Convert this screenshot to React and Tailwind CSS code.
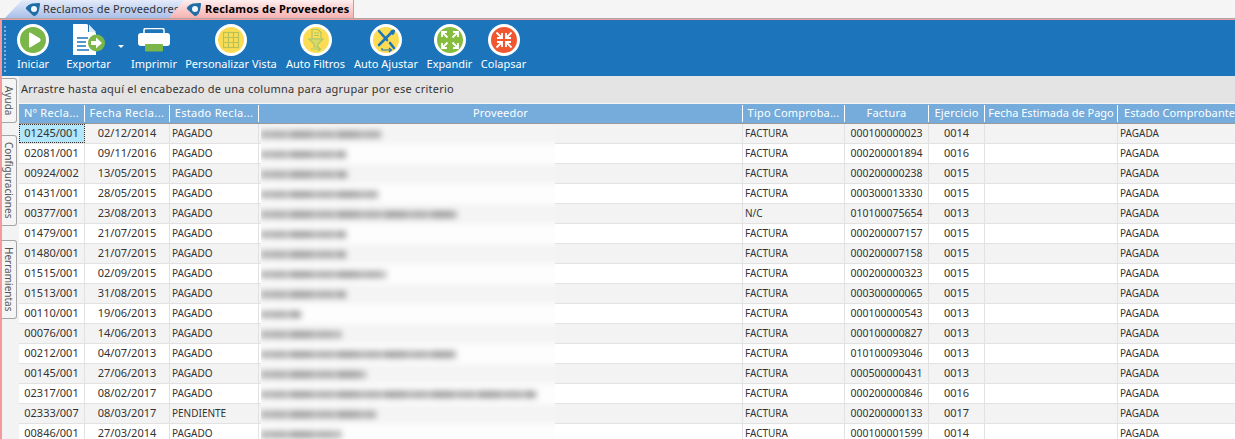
import React from 'react';

const rows = [
  ['01245/001', '02/12/2014', 'PAGADO', 'FACTURA', '000100000023', '0014', 120],
  ['02081/001', '09/11/2016', 'PAGADO', 'FACTURA', '000200001894', '0016', 85],
  ['00924/002', '13/05/2015', 'PAGADO', 'FACTURA', '000200000238', '0015', 86],
  ['01431/001', '28/05/2015', 'PAGADO', 'FACTURA', '000300013330', '0015', 117],
  ['00377/001', '23/08/2013', 'PAGADO', 'N/C', '010100075654', '0013', 196],
  ['01479/001', '21/07/2015', 'PAGADO', 'FACTURA', '000200007157', '0015', 85],
  ['01480/001', '21/07/2015', 'PAGADO', 'FACTURA', '000200007158', '0015', 85],
  ['01515/001', '02/09/2015', 'PAGADO', 'FACTURA', '000200000323', '0015', 125],
  ['01513/001', '31/08/2015', 'PAGADO', 'FACTURA', '000300000065', '0015', 85],
  ['00110/001', '19/06/2013', 'PAGADO', 'FACTURA', '000100000543', '0013', 40],
  ['00076/001', '14/06/2013', 'PAGADO', 'FACTURA', '000100000827', '0013', 80],
  ['00212/001', '04/07/2013', 'PAGADO', 'FACTURA', '010100093046', '0013', 195],
  ['00145/001', '27/06/2013', 'PAGADO', 'FACTURA', '000500000431', '0013', 105],
  ['02317/001', '08/02/2017', 'PAGADO', 'FACTURA', '000200000846', '0016', 275],
  ['02333/007', '08/03/2017', 'PENDIENTE', 'FACTURA', '000200000133', '0017', 115],
  ['00846/001', '27/03/2014', 'PAGADO', 'FACTURA', '000100001599', '0014', 80],
];

const gridCols = 'grid grid-cols-[66px_85px_89px_484px_102px_84px_56px_133px_200px]';

const headers = [
  ['Nº Recla...', 'text-center tracking-[0.3px]'],
  ['Fecha Recla...', 'text-center tracking-[0.4px]'],
  ['Estado Recla...', 'text-center tracking-[0.3px]'],
  ['Proveedor', 'text-center tracking-[0.2px]'],
  ['Tipo Comproba...', 'text-center tracking-[0.2px]'],
  ['Factura', 'text-center tracking-[0.2px]'],
  ['Ejercicio', 'text-center tracking-[0.2px]'],
  ['Fecha Estimada de Pago', 'text-center'],
  ['Estado Comprobante', 'text-left pl-[6px] tracking-[0.1px]'],
];

const TabIcon = () => (
  <svg width="16" height="15" viewBox="0 0 16 14" className="shrink-0">
    <path d="M1 5 Q3 2 7 1 L14 0.5 Q15.5 0.5 15 2 L14 8 Q13 12 10 13.5 Q9 14 8 13 L1.5 7 Q0.5 6 1 5Z" fill="#1f6ea6" />
    <circle cx="9" cy="6.5" r="3" fill="#f4f8fb" />
  </svg>
);

// white ring with a coloured disc, the base of most toolbar icons
const Disc = ({ color, children }) => (
  <svg width="32" height="32" viewBox="0 0 32 32">
    <circle cx="16" cy="16" r="14.5" fill={color} stroke="#fff" strokeWidth="3" />
    {children}
  </svg>
);

const PlayIcon = () => (
  <Disc color="#7ab648">
    <path d="M12 9.5 Q12 8 13.5 8.8 L23 14.6 Q24.4 16 23 17.4 L13.5 23.2 Q12 24 12 22.5Z" fill="#fff" />
  </Disc>
);

const ExportIcon = () => (
  <svg width="34" height="32" viewBox="0 0 34 32">
    <path d="M1 0 H15 L24 9 V31 H1 Z" fill="#fff" />
    <path d="M16 0 L24 8 H16 Z" fill="#1c75bb" />
    <path d="M17 0.5 L24 8 H17 Z" fill="#dce9f4" />
    <path d="M5 14 H16 M5 18 H14 M5 22 H14 M5 26 H17" stroke="#1c75bb" strokeWidth="1.4" />
    <circle cx="24.5" cy="19" r="8.5" fill="#7ab648" />
    <path d="M19 17 H24 V13.5 L30 19 L24 24.5 V21 H19 Z" fill="#fff" />
  </svg>
);

const PrinterIcon = () => (
  <svg width="32" height="24" viewBox="0 0 32 24">
    <path d="M6 5 V2 Q6 0.5 8 0.5 H24 Q26 0.5 26 2 V5" fill="none" stroke="#fff" strokeWidth="1.5" />
    <path d="M3 5 H29 Q32 5 32 8 V15 Q32 18 29 18 H3 Q0 18 0 15 V8 Q0 5 3 5Z" fill="#fff" />
    <rect x="7" y="16" width="18" height="7.5" rx="1" fill="#7ab648" />
  </svg>
);

const GridIcon = () => (
  <Disc color="#fbdc52">
    <g stroke="#b7c25a" strokeWidth="1.2" fill="none">
      <rect x="8.5" y="8.5" width="15" height="15" />
      <path d="M13.5 8.5 V23.5 M18.5 8.5 V23.5 M8.5 13.5 H23.5 M8.5 18.5 H23.5" />
    </g>
  </Disc>
);

const FilterIcon = () => (
  <Disc color="#fbdc52">
    <g stroke="#a9c86a" strokeWidth="1.2" fill="none">
      <path d="M12 5.5 H18 L21 8.5 V15 H12 Z" />
      <path d="M14 9 H19 M14 11.5 H19" />
      <path d="M9 15 H23 L18 20 V23 H14 V20 Z" fill="#d8d866" />
      <path d="M11 25 H20 M18 23 L20.5 25 L18 27" />
    </g>
  </Disc>
);

const WrenchIcon = () => (
  <Disc color="#fbdc52">
    <path d="M9 7 L17 16 M20 19 L24 24" stroke="#1c75bb" strokeWidth="2.6" strokeLinecap="round" />
    <path d="M23 7 L9 21" stroke="#1c75bb" strokeWidth="2.6" strokeLinecap="round" />
    <path d="M25 6 Q21 5 20 8 L22 11 Q25 11 25 6Z" fill="#1c75bb" />
    <path d="M12 24 V26 H21 M19 24 L21.5 26 L19 28" fill="none" stroke="#1c75bb" strokeWidth="1.2" />
  </Disc>
);

const ExpandIcon = () => (
  <Disc color="#86bd3e">
    <g fill="none" stroke="#fff" strokeWidth="1.8">
      <path d="M8 13 V8 H13 M8 8 L13.5 13.5" />
      <path d="M19 8 H24 V13 M24 8 L18.5 13.5" />
      <path d="M8 19 V24 H13 M8 24 L13.5 18.5" />
      <path d="M19 24 H24 V19 M24 24 L18.5 18.5" />
    </g>
  </Disc>
);

const CollapseIcon = () => (
  <Disc color="#f0562f">
    <g fill="none" stroke="#fff" strokeWidth="1.8">
      <path d="M9 14 H14 V9 M14 14 L8.5 8.5" />
      <path d="M18 9 V14 H23 M18 14 L23.5 8.5" />
      <path d="M9 18 H14 V23 M14 18 L8.5 23.5" />
      <path d="M18 23 V18 H23 M18 18 L23.5 23.5" />
    </g>
  </Disc>
);

const tools = [
  { label: 'Iniciar', icon: <PlayIcon />, width: 'w-[32px] mr-[6px]' },
  { label: 'Exportar', icon: <ExportIcon />, width: 'w-[45px] mr-[11px]', caret: true },
  { label: 'Imprimir', icon: <PrinterIcon />, width: 'w-[42px]' },
  { label: 'Personalizar Vista', icon: <GridIcon />, width: 'w-[90px]' },
  { label: 'Auto Filtros', icon: <FilterIcon />, width: 'w-[57px]' },
  { label: 'Auto Ajustar', icon: <WrenchIcon />, width: 'w-[62px]' },
  { label: 'Expandir', icon: <ExpandIcon />, width: 'w-[43px]' },
  { label: 'Colapsar', icon: <CollapseIcon />, width: 'w-[43px]' },
];

const sideTabs = [
  { label: 'Ayuda', cls: 'h-[45px] mt-[2px]' },
  { label: 'Configuraciones', cls: 'h-[91px] mt-[12px]' },
  { label: 'Herramientas', cls: 'h-[79px] mt-[14px]' },
];

const App = () => {
  return (
    <div className="w-[1235px] h-[439px] overflow-hidden flex flex-col bg-[#f5f5f5] text-[11px] text-[#333] font-['Noto_Sans',sans-serif]">
      {/* document tabs */}
      <div className="h-[19px] shrink-0 flex pl-[5px] border-b border-[#a9a9a9]">
        <div className="w-[180px] h-[18px] flex items-center gap-[2px] pl-[20px] overflow-hidden text-[#333] tracking-[0.15px] bg-gradient-to-b from-[#e4ebf9] to-[#a9bfe9] [clip-path:polygon(0_100%,17px_0,100%_0,100%_100%)]">
          <TabIcon />
          <span className="whitespace-nowrap">Reclamos de Proveedores</span>
        </div>
        <div className="w-[185px] h-[18px] -ml-[16px] flex items-center gap-[3px] pl-[17px] font-bold text-black tracking-[0.2px] bg-gradient-to-b from-[#fdeeee] to-[#f6b1b1] border-r border-[#a9a9a9] [clip-path:polygon(0_100%,15px_0,100%_0,100%_100%)]">
          <TabIcon />
          <span className="whitespace-nowrap">Reclamos de Proveedores</span>
        </div>
      </div>

      <div className="flex-1 min-h-0 flex flex-col border-l-2 border-t border-[#f39a9d]">
        {/* toolbar */}
        <div className="h-[56px] shrink-0 bg-[#1c75bb] flex items-start pl-[15px] gap-[11px] relative">
          <div className="absolute left-[2px] top-[6px] bottom-[4px] border-l-2 border-dotted border-[#7fb2da]" />
          {tools.map(tool => (
            <div key={tool.label} className={`${tool.width} relative flex flex-col items-center text-white`}>
              <div className="h-[38px] flex items-center justify-center pt-[1px]">{tool.icon}</div>
              <span className="whitespace-nowrap leading-[14px] mt-[-1px]">{tool.label}</span>
              {tool.caret && <div className="absolute left-[52px] top-[25px] border-x-[3px] border-t-[3px] border-x-transparent border-t-white" />}
            </div>
          ))}
        </div>

        <div className="flex-1 min-h-0 flex">
          {/* side tabs */}
          <div className="w-[17px] shrink-0 flex flex-col bg-[#f3f3f3]">
            {sideTabs.map(tab => (
              <div key={tab.label} className={`${tab.cls} w-[15px] flex items-center justify-center bg-[#f5f5f5] border border-l-0 border-[#a5a5a5] rounded-br-[3px] rounded-tr-[3px] text-[#555] text-[10px]`}>
                <span className="[writing-mode:vertical-rl] whitespace-nowrap leading-[14px]">{tab.label}</span>
              </div>
            ))}
          </div>

          <div className="flex-1 min-w-0 flex flex-col overflow-hidden">
            {/* group panel */}
            <div className="h-[27px] shrink-0 bg-[#e4e4e4] flex items-center pl-[2px] pb-[1px] text-[#333] tracking-[0.25px]">
              Arrastre hasta aquí el encabezado de una columna para agrupar por ese criterio
            </div>

            {/* grid header */}
            <div className={`${gridCols} w-[1299px] h-[20px] shrink-0 mt-[1px] bg-[#75acdc] border-b border-[#9a9a9a] text-white`}>
              {headers.map(([name, align], i) => (
                <div key={name} className={`${align} ${i < 8 ? 'border-r border-white' : ''} my-[1px] leading-[16px] whitespace-nowrap overflow-hidden`}>
                  {name}
                </div>
              ))}
            </div>

            {/* grid rows */}
            <div className="relative flex-1 min-h-0 bg-white">
              {rows.map((row, i) => (
                <div
                  key={row[0]}
                  className={`${gridCols} w-[1299px] h-5 border-b border-[#e2e2e2] leading-[18px] ${i % 2 === 0 ? 'bg-[#f3f3f3]' : 'bg-white'}`}
                >
                  <div className={`border-r border-[#e2e2e2] text-center ${i === 0 ? 'bg-[#b2e6fb] outline-1 outline-dotted -outline-offset-1 outline-[#333]' : ''}`}>{row[0]}</div>
                  <div className="border-r border-[#e2e2e2] text-center">{row[1]}</div>
                  <div className="border-r border-[#e2e2e2] pl-[2px] text-[10px] leading-[19px]">{row[2]}</div>
                  <div className="border-r border-[#e2e2e2]" />
                  <div className="border-r border-[#e2e2e2] pl-[2px] text-[10px] leading-[19px]">{row[3]}</div>
                  <div className="border-r border-[#e2e2e2] text-center text-[10.5px]">{row[4]}</div>
                  <div className="border-r border-[#e2e2e2] text-center">{row[5]}</div>
                  <div className="border-r border-[#e2e2e2]" />
                  <div className="pl-[2px] text-[10px] leading-[19px]">PAGADA</div>
                </div>
              ))}

              {/* blurred-out supplier names */}
              <div className="absolute top-0 bottom-0 left-[242px] w-[294px] overflow-hidden">
                <div className="blur-[3px] -mx-[6px]">
                  {rows.map((row, i) => (
                    <div key={row[0]} className={`h-5 flex items-center pl-[6px] ${i % 2 === 0 ? 'bg-[#f4f4f4]' : 'bg-[#fdfdfd]'}`}>
                      <div
                        className="h-[7px] bg-[repeating-linear-gradient(90deg,#a0a0a0_0_6px,#bcbcbc_6px_9px,#a6a6a6_9px_26px,#c8c8c8_26px_29px,#999999_29px_47px)]"
                        style={{ width: row[6] }}
                      />
                    </div>
                  ))}
                </div>
              </div>
            </div>
          </div>
        </div>
      </div>
    </div>
  );
};

export default App;
